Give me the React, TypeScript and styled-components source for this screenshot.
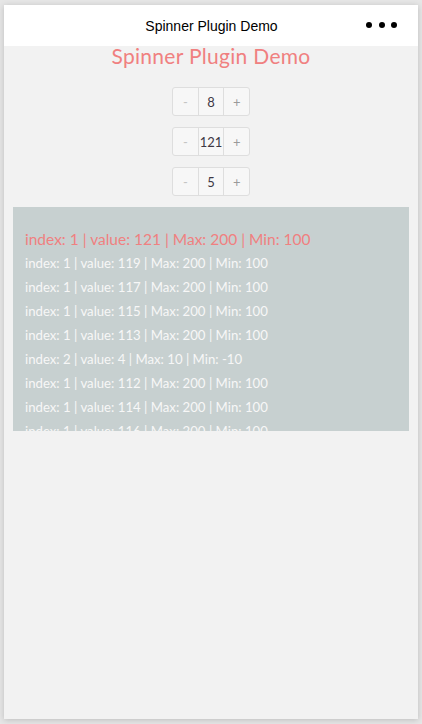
import React from "react";
import styled, { createGlobalStyle } from "styled-components";

const Global = createGlobalStyle`
  html, body { margin: 0; padding: 0; background: #e6e6e6; }
  body { font-family: "Liberation Sans", Arial, sans-serif; }
`;

const Stage = styled.div`
  width: 422px;
  height: 724px;
  padding: 5px 4px 5px 4px;
  box-sizing: border-box;
`;

const Phone = styled.div`
  width: 414px;
  height: 714px;
  background: #f2f2f2;
  box-shadow: 0 1px 6px rgba(0, 0, 0, 0.18);
  display: flex;
  flex-direction: column;
  overflow: hidden;
`;

const NavBar = styled.div`
  height: 41px;
  background: #ffffff;
  display: flex;
  align-items: center;
  justify-content: center;
  position: relative;
  flex-shrink: 0;
`;

const NavTitle = styled.div`
  font-family: "Liberation Sans", Arial, sans-serif;
  font-size: 14px;
  color: #000;
  padding-left: 1px;
`;

const Dots = styled.div`
  position: absolute;
  right: 21px;
  top: 17px;
  display: flex;
  gap: 6.5px;
`;

const Dot = styled.span`
  width: 6px;
  height: 6px;
  border-radius: 50%;
  background: #000;
`;

const Title = styled.h1`
  margin: 0;
  font-family: "Lato", sans-serif;
  font-weight: 400;
  font-size: 21px;
  line-height: 20px;
  color: #f08080;
  text-align: center;
  letter-spacing: 0.3px;
`;

const Steppers = styled.div`
  display: flex;
  flex-direction: column;
  align-items: center;
  gap: 11px;
  margin-top: 21px;
`;

const Stepper = styled.div`
  display: flex;
  width: 78px;
  height: 29px;
  box-sizing: border-box;
  border: 1px solid #dedede;
  border-radius: 3px;
  background: #f7f7f7;
  overflow: hidden;
`;

const Cell = styled.div<{ $tone: "minus" | "value" | "plus" }>`
  flex: 1;
  display: flex;
  align-items: center;
  justify-content: center;
  font-family: "Lato", sans-serif;
  font-size: 13px;
  color: ${(p) =>
    p.$tone === "minus" ? "#c4c4c4" : p.$tone === "plus" ? "#9a9a9a" : "#3e3844"};
  border-left: ${(p) => (p.$tone === "minus" ? "none" : "1px solid #dedede")};
`;

const Log = styled.div`
  margin: 11px 9px 0 9px;
  height: 224px;
  background: #c7d0d0;
  overflow: hidden;
  padding: 20px 12px 0 12px;
  box-sizing: border-box;
`;

const Row = styled.div<{ $hot?: boolean }>`
  font-family: "Lato", sans-serif;
  font-size: ${(p) => (p.$hot ? "15.5px" : "13.2px")};
  line-height: 24px;
  height: 24px;
  color: ${(p) => (p.$hot ? "#f08080" : "#f7f7f7")};
  white-space: nowrap;
`;

const rows: [number, number, number, number][] = [
  [1, 119, 200, 100],
  [1, 117, 200, 100],
  [1, 115, 200, 100],
  [1, 113, 200, 100],
  [2, 4, 10, -10],
  [1, 112, 200, 100],
  [1, 114, 200, 100],
  [1, 116, 200, 100],
];

const fmt = (r: [number, number, number, number]) =>
  `index: ${r[0]} | value: ${r[1]} | Max: ${r[2]} | Min: ${r[3]}`;

export default function App() {
  return (
    <>
      <Global />
      <Stage>
        <Phone>
          <NavBar>
            <NavTitle>Spinner Plugin Demo</NavTitle>
            <Dots>
              <Dot />
              <Dot />
              <Dot />
            </Dots>
          </NavBar>
          <Title>Spinner Plugin Demo</Title>
          <Steppers>
            {[8, 121, 5].map((v) => (
              <Stepper key={v}>
                <Cell $tone="minus">-</Cell>
                <Cell $tone="value">{v}</Cell>
                <Cell $tone="plus">+</Cell>
              </Stepper>
            ))}
          </Steppers>
          <Log>
            <Row $hot>{fmt([1, 121, 200, 100])}</Row>
            {rows.map((r, i) => (
              <Row key={i}>{fmt(r)}</Row>
            ))}
          </Log>
        </Phone>
      </Stage>
    </>
  );
}
